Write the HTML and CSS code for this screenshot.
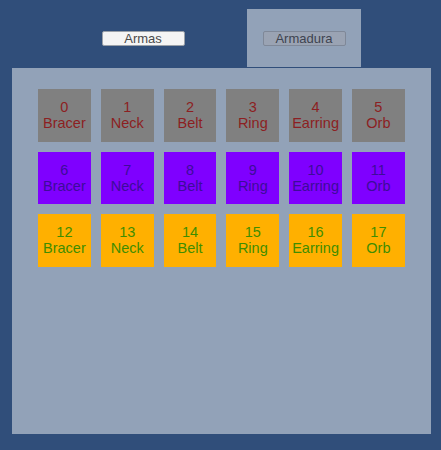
FILE: index.html
```html
<!DOCTYPE html>
<html>
<head>
<meta charset="utf-8">
<link rel="stylesheet" href="styles.css">
</head>
<body>
<div class="app">
  <div class="tabs">
    <div class="tab"><button class="btn btn-light">Armas</button></div>
    <div class="tab active"><button class="btn btn-dim">Armadura</button></div>
  </div>
  <div class="panel">
    <div class="grid">
      <div class="cell gray"><span>0</span><span>Bracer</span></div>
      <div class="cell gray"><span>1</span><span>Neck</span></div>
      <div class="cell gray"><span>2</span><span>Belt</span></div>
      <div class="cell gray"><span>3</span><span>Ring</span></div>
      <div class="cell gray"><span>4</span><span>Earring</span></div>
      <div class="cell gray"><span>5</span><span>Orb</span></div>
      <div class="cell purple"><span>6</span><span>Bracer</span></div>
      <div class="cell purple"><span>7</span><span>Neck</span></div>
      <div class="cell purple"><span>8</span><span>Belt</span></div>
      <div class="cell purple"><span>9</span><span>Ring</span></div>
      <div class="cell purple"><span>10</span><span>Earring</span></div>
      <div class="cell purple"><span>11</span><span>Orb</span></div>
      <div class="cell orange"><span>12</span><span>Bracer</span></div>
      <div class="cell orange"><span>13</span><span>Neck</span></div>
      <div class="cell orange"><span>14</span><span>Belt</span></div>
      <div class="cell orange"><span>15</span><span>Ring</span></div>
      <div class="cell orange"><span>16</span><span>Earring</span></div>
      <div class="cell orange"><span>17</span><span>Orb</span></div>
    </div>
  </div>
</div>
</body>
</html>
```
FILE: styles.css
```css
html, body {
  margin: 0;
  padding: 0;
  background: #304e7a;
  font-family: "Liberation Sans", Arial, sans-serif;
}
.app {
  width: 441px;
  height: 450px;
  overflow: hidden;
}
.tabs {
  display: flex;
  gap: 47px;
  padding-left: 86px;
  margin-top: 9px;
  height: 58px;
  margin-bottom: 1px;
}
.tab {
  width: 114px;
  height: 58px;
  display: flex;
  align-items: center;
  justify-content: center;
}
.tab.active {
  background: #92a2b8;
}
.btn {
  box-sizing: border-box;
  width: 83px;
  height: 15px;
  padding: 0;
  margin: 0;
  border-radius: 2px;
  font-family: "Liberation Sans", Arial, sans-serif;
  font-size: 13px;
  line-height: 13px;
  color: #4a4a4a;
}
.btn-light {
  background: #f4f4f4;
  border: 1px solid #9aa0a8;
}
.btn-dim {
  background: #9aa3b3;
  border: 1px solid #7f8898;
  color: #3e4450;
}
.panel {
  margin-left: 12px;
  width: 419px;
  height: 366px;
  box-sizing: border-box;
  background: #92a2b8;
  padding: 21px 0 0 26px;
}
.grid {
  display: grid;
  grid-template-columns: repeat(6, 52.8px);
  grid-auto-rows: 52.5px;
  column-gap: 10px;
  row-gap: 10px;
}
.cell {
  display: flex;
  flex-direction: column;
  align-items: center;
  justify-content: center;
  font-size: 14.5px;
  line-height: 16px;
}
.gray { background: #808080; color: #8c1f22; }
.purple { background: #7f00ff; color: #3d0c99; }
.orange { background: #ffb000; color: #3f8d00; }
```
